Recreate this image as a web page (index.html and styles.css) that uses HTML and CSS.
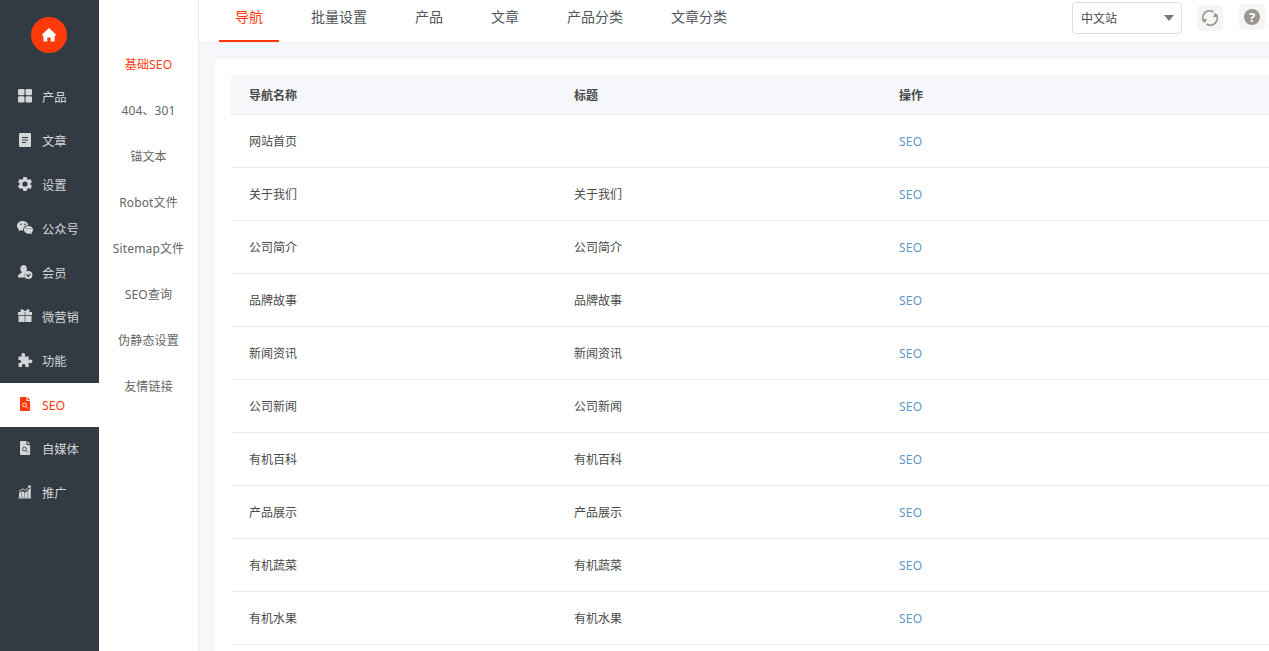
FILE: index.html
```html
<!DOCTYPE html>
<html lang="zh-CN">
<head>
<meta charset="utf-8">
<title>SEO</title>
<link rel="stylesheet" href="styles.css">
</head>
<body>
<div class="app">
  <nav class="sidebar">
    <a class="home"><svg width="14" height="14" viewBox="0 0 14 14"><path d="M7 0 14 6.6 13.2 8H12.6V12.6Q12.6 13.6 11.6 13.6H8.7V9.5H5.3V13.6H2.4Q1.4 13.6 1.4 12.6V8H.8L0 6.6Z"/></svg></a>
    <a class="item"><svg class="icon" viewBox="0 0 16 16"><rect x="1" y="1" width="6.5" height="6.2" rx="1.2"/><rect x="8.5" y="1" width="6.5" height="6.2" rx="1.2"/><rect x="1" y="8.3" width="6.5" height="6.2" rx="1.2"/><rect x="8.5" y="8.3" width="6.5" height="6.2" rx="1.2"/></svg><span>产品</span></a>
    <a class="item"><svg class="icon" viewBox="0 0 16 16"><rect x="2" y="1" width="12" height="14" rx="1"/><path class="line" d="M5 5.5h6M5 8h6M5 10.5h4"/></svg><span>文章</span></a>
    <a class="item"><svg class="icon" viewBox="0 0 16 16"><path fill-rule="evenodd" d="M6.400 1h3.200l.5 2 1.300.7 2-.6L15 5.900l-1.500 1.400v1.400L15 10.100l-1.600 2.800-2-.6-1.300.7-.5 2H6.400l-.5-2-1.300-.7-2 .6L1 10.100l1.500-1.400V7.300L1 5.900l1.600-2.800 2 .6L5.900 3ZM8 5.400a2.600 2.600 0 1 0 0 5.200 2.600 2.600 0 0 0 0-5.200Z"/></svg><span>设置</span></a>
    <a class="item"><svg class="icon" viewBox="0 0 16 16"><path d="M5.800 1C2.500 1 0 3.100 0 5.800c0 1.500.8 2.800 2 3.700L1.500 11.300 3.700 10.200c.9.3 1.700.3 2.500.2C6 7.500 8.200 5.200 11.500 5.100 10.900 2.700 8.600 1 5.800 1Z"/><path d="M11.500 5.900C8.900 5.900 7 7.600 7 9.800s2 3.900 4.500 3.900l1.500-.2 1.800.9-.4-1.500c1-.7 1.600-1.800 1.600-3.100 0-2.200-2-3.900-4.500-3.900Z"/><g class="hole"><circle cx="3.800" cy="4.300" r=".8"/><circle cx="7.800" cy="4.300" r=".8"/><circle cx="10" cy="8.600" r=".6"/><circle cx="13" cy="8.600" r=".6"/></g></svg><span>公众号</span></a>
    <a class="item"><svg class="icon" viewBox="0 0 16 16"><path d="M6.500 1a3.200 3.700 0 0 0-1.900 6.700v1.100L1.500 10.800Q1 11.200 1 12v1.500h7a4.500 4.500 0 0 1 1.500-6c1.200-2.700.1-6.500-3-6.500Z"/><circle cx="11.400" cy="11" r="4"/><path class="line" d="M9.500 10.300 11.300 12.500 13.400 9.800"/></svg><span>会员</span></a>
    <a class="item"><svg class="icon" viewBox="0 0 16 16"><path d="M1 4h3C2.500 2.300 4 .7 5.600 1.300L8 3.300l2.400-2C12 .7 13.500 2.300 12 4h3v3.300H8.300V4h-.6v3.300H1ZM1.500 7.900h6.200V14H1.500Zm6.800 0h6.200V14H8.300Z"/></svg><span>微营销</span></a>
    <a class="item"><svg class="icon" viewBox="0 0 16 16"><path d="M1.500 4.600H5C3.800 2.700 4.600 1 6.200 1s2.500 1.700 1.500 3.600h4v3.500c1.900-1.200 3.700-.3 3.700 1.300s-1.800 2.300-3.700 1.200V15H8.200c.7-1.800-.1-3-1.500-3s-2.200 1.200-1.500 3H1.500v-4c1.500.3 2.500-.3 2.500-1.600S3 7.600 1.500 8.100Z"/></svg><span>功能</span></a>
    <a class="item active"><svg class="icon" viewBox="0 0 16 16"><path d="M4 1h5.500v4h3.600v9q0 1-1 1H4q-1 0-1-1V2q0-1 1-1Zm6.500 0L13 4h-2.500Z"/><circle class="line thin" cx="7.500" cy="9" r="1.900"/><path class="line thin" d="m9 10.500 2 2"/></svg><span>SEO</span></a>
    <a class="item"><svg class="icon" viewBox="0 0 16 16"><path d="M4 1h5.500v4h3.600v9q0 1-1 1H4q-1 0-1-1V2q0-1 1-1Zm6.500 0L13 4h-2.500Z"/><circle class="line thin" cx="7.500" cy="9" r="1.900"/><path class="line thin" d="m9 10.500 2 2"/></svg><span>自媒体</span></a>
    <a class="item"><svg class="icon" viewBox="0 0 16 16"><path d="M2 9 4.600 7V13H2Zm3-2L7.600 8.500V13H5Zm3 1.700L10.700 6.500V13H8Zm3.100-3L13.800 4v9h-2.700ZM1.500 13.300h12.700v1.200H1.500Z"/><path class="trend" d="M2 7.500 5.500 4.800 8.200 6.500 12.500 2.500"/><path d="M10.500 1.800 14 1.300 13.600 4.600Z"/></svg><span>推广</span></a>
  </nav>
  <nav class="subnav">
    <a class="current">基础SEO</a><a>404、301</a><a>锚文本</a><a>Robot文件</a><a>Sitemap文件</a><a>SEO查询</a><a>伪静态设置</a><a>友情链接</a>
  </nav>
  <main class="main">
    <header class="topbar">
      <div class="tabs"><a class="selected">导航</a><a>批量设置</a><a>产品</a><a>文章</a><a>产品分类</a><a>文章分类</a></div>
      <div class="tools">
        <div class="select"><span>中文站</span><i class="caret"></i></div>
        <a class="tool"><svg width="18" height="18" viewBox="0 0 18 18"><g class="ring"><path d="M3 12.800A7 7 0 0 1 12.500 2.900M15 5.200A7 7 0 0 1 5.500 15.100"/></g><path d="M1 10.500 6 9.800 4 14.200ZM17 7.500 12 8.200 14 3.800Z"/></svg></a>
        <a class="tool help"><span>?</span></a>
      </div>
    </header>
    <section class="panel">
      <div class="table">
        <div class="row head"><span>导航名称</span><span>标题</span><span>操作</span></div>
        <div class="row"><span>网站首页</span><span></span><a>SEO</a></div>
        <div class="row"><span>关于我们</span><span>关于我们</span><a>SEO</a></div>
        <div class="row"><span>公司简介</span><span>公司简介</span><a>SEO</a></div>
        <div class="row"><span>品牌故事</span><span>品牌故事</span><a>SEO</a></div>
        <div class="row"><span>新闻资讯</span><span>新闻资讯</span><a>SEO</a></div>
        <div class="row"><span>公司新闻</span><span>公司新闻</span><a>SEO</a></div>
        <div class="row"><span>有机百科</span><span>有机百科</span><a>SEO</a></div>
        <div class="row"><span>产品展示</span><span>产品展示</span><a>SEO</a></div>
        <div class="row"><span>有机蔬菜</span><span>有机蔬菜</span><a>SEO</a></div>
        <div class="row"><span>有机水果</span><span>有机水果</span><a>SEO</a></div>
      </div>
    </section>
  </main>
</div>
</body>
</html>
```
FILE: styles.css
```css
* { box-sizing: border-box; }
body { margin: 0; overflow: hidden; font: 12px/18px "Noto Sans", "Noto Sans CJK SC", sans-serif; color: #4a4a4a; }
.app { display: flex; height: 100vh; }
.sidebar { width: 99px; flex: none; background: #323b44; color: #d3d5d7; }
.home { display: flex; align-items: center; justify-content: center; width: 36px; height: 36px; margin: 17px 0 22px 31px; border-radius: 50%; background: #ff3a0a; }
.home svg { fill: #fff; }
.item { display: flex; align-items: center; gap: 9px; height: 44px; padding-left: 17px; font-size: 12.300px; white-space: nowrap; --bg: #323b44; }
.item span { padding-top: 2px; }
.item.active { background: #fff; color: #ff3a0a; --bg: #fff; }
.icon { width: 16px; height: 16px; flex: none; fill: currentColor; margin-top: -2px; }
.line { fill: none; stroke: var(--bg); stroke-width: 1.200; }
.thin { stroke-width: 1; opacity: .8; }
.hole { fill: var(--bg); }
.trend { fill: none; stroke: currentColor; stroke-width: 1; }
.subnav { width: 100px; flex: none; padding-top: 42px; border-right: 1px solid #ebebed; background: #fff; color: #666; }
.subnav a { display: flex; height: 46px; align-items: center; justify-content: center; white-space: nowrap; letter-spacing: .15px; }
.subnav .current { color: #ff3a0a; }
.main { flex: 1; min-width: 0; background: #f6f7fb; overflow: hidden; }
.topbar { display: flex; justify-content: space-between; height: 43px; background: #fff; border-bottom: 1px solid #ebebed; }
.tabs { display: flex; gap: 16px; padding-left: 20px; font-size: 14px; color: #50545b; }
.tabs a { height: 42px; padding: 8px 16px 0; }
.tabs .selected { color: #ff3a0a; border-bottom: 2px solid #ff3a0a; }
.tools { display: flex; align-items: flex-start; padding: 2px 4px 0 0; }
.select { display: flex; align-items: center; justify-content: space-between; width: 110px; height: 32px; padding: 0 7px 0 8px; border: 1px solid #dcdee2; border-radius: 4px; }
.select span { padding-top: 2px; }
.caret { border: 5px solid transparent; border-top: 6px solid #74797d; border-bottom: 0; margin-top: -1px; }
.tool { display: flex; align-items: center; justify-content: center; width: 26px; height: 26px; border-radius: 5px; background: #f6f5f4; margin: 3px 0 0 15px; }
.tool svg { fill: #999590; }
.ring { fill: none; stroke: #999590; stroke-width: 1.800; }
.help { margin: 2px 0 0 16px; }
.help span { width: 16px; height: 16px; border-radius: 50%; background: #999590; color: #fff; font: bold 13px/16px "Noto Sans", sans-serif; text-align: center; }
.panel { margin: 16px 0 0 16px; padding: 16px 0 20px 16px; background: #fff; }
.table { min-height: 592px; }
.row { display: grid; grid-template-columns: 325px 325px 1fr; align-items: center; height: 53px; padding-top: 2px; border-bottom: 1px solid #e8e9ec; }
.row > * { padding-left: 18px; }
.row a { color: #5f97c5; letter-spacing: .2px; }
.head { height: 40px; padding-top: 3px; background: #f6f7fb; font-weight: 700; }
```
